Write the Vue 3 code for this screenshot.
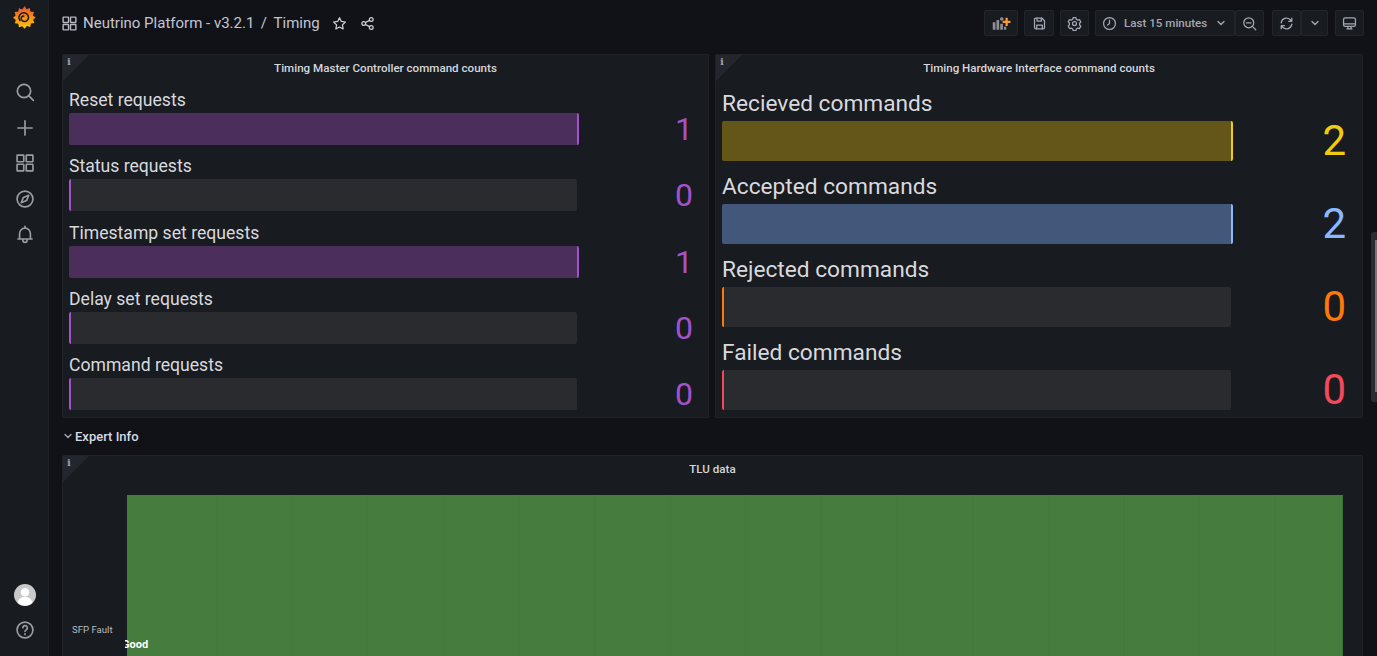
<script setup>
const leftRows = [
  { label: 'Reset requests', value: 1, tone: 'purple' },
  { label: 'Status requests', value: 0, tone: 'purple' },
  { label: 'Timestamp set requests', value: 1, tone: 'purple' },
  { label: 'Delay set requests', value: 0, tone: 'purple' },
  { label: 'Command requests', value: 0, tone: 'purple' }
]
const rightRows = [
  { label: 'Recieved commands', value: 2, tone: 'yellow' },
  { label: 'Accepted commands', value: 2, tone: 'blue' },
  { label: 'Rejected commands', value: 0, tone: 'orange' },
  { label: 'Failed commands', value: 0, tone: 'red' }
]
</script>

<template>
  <div class="app">
    <aside class="side">
      <svg class="logo" viewBox="0 0 24 24" width="24" height="24">
        <defs>
          <linearGradient id="lg" x1="0" y1="0" x2="0" y2="1">
            <stop offset="0" stop-color="#ef5228" />
            <stop offset="1" stop-color="#fbca0a" />
          </linearGradient>
        </defs>
        <path fill="url(#lg)" d="M12.6 1l2 3.2 3.2-1.2.6 3.5 3.6.5-1.2 3.4 2.9 2-2.6 2.4 1.4 3.3-3.6.5-.6 3.4-3.4-.9-2.3 2.7-2.400-2.600-3.300 1.100-.6-3.500-3.500-.6 1-3.300L1 12.700l2.600-2.200-1-3.400 3.600-.4.8-3.500 3.300 1.300z" />
        <path fill="none" stroke="#181b1f" stroke-width="1.500" stroke-linecap="round" d="M8 15.500c-2.600-3.600.2-8 4.200-7.700 3.600.3 5.600 4.400 3.400 7.200-1.700 2.200-5.200 1.900-6.200-.5-.7-1.800.6-3.600 2.400-3.500" />
      </svg>
      <nav class="side-top">
        <svg class="ico" viewBox="0 0 24 24"><circle cx="10.800" cy="10.800" r="8" /><path d="M17 17l5 5" /></svg>
        <svg class="ico" viewBox="0 0 24 24"><path d="M12 3.500v17M3.500 12h17" /></svg>
        <svg class="ico" viewBox="0 0 24 24"><rect x="2.500" y="2.500" width="8" height="8" rx=".6" /><rect x="13.500" y="2.500" width="8" height="8" rx=".6" /><rect x="2.500" y="13.500" width="8" height="8" rx=".6" /><rect x="13.500" y="13.500" width="8" height="8" rx=".6" /></svg>
        <svg class="ico" viewBox="0 0 24 24"><circle cx="12" cy="12" r="9.500" /><path d="M16.500 7.500l-2.600 6.400-6.400 2.600 2.600-6.400z" /></svg>
        <svg class="ico" viewBox="0 0 24 24"><path d="M5.500 18v-6.500a6.500 6.500 0 0113 0V18M3.500 18h17M12 2.800V5M9.500 18.500v1a2.500 2.500 0 005 0v-1" /></svg>
      </nav>
      <div class="side-bottom">
        <svg class="avatar" viewBox="0 0 22 22" width="22" height="22">
          <circle cx="11" cy="11" r="11" fill="#c9c9c9" />
          <circle cx="11" cy="8.200" r="4.200" fill="#fff" />
          <path fill="#fff" d="M3.600 19c.7-4.400 3.600-6 7.400-6s6.700 1.600 7.400 6a11 11 0 01-14.800 0z" />
        </svg>
        <svg class="ico" viewBox="0 0 24 24"><circle cx="12" cy="12" r="9.500" /><path d="M9.400 9.400a2.700 2.700 0 115 1.400c-.7 1-2.400 1.500-2.400 3" /><path d="M12 16.600v.9" /></svg>
      </div>
    </aside>

    <main class="main">
      <header class="top">
        <svg class="ico crumb-ico" viewBox="0 0 24 24"><rect x="3" y="3" width="7.600" height="7.600" rx=".6" /><rect x="13.400" y="3" width="7.600" height="7.600" rx=".6" /><rect x="3" y="13.400" width="7.600" height="7.600" rx=".6" /><rect x="13.400" y="13.400" width="7.600" height="7.600" rx=".6" /></svg>
        <span class="crumb">Neutrino Platform - v3.2.1</span>
        <span class="crumb sep">/</span>
        <span class="crumb">Timing</span>
        <svg class="ico act star" viewBox="0 0 24 24"><path d="M12 2.800l2.900 5.900 6.500.9-4.700 4.600 1.100 6.500-5.800-3.100-5.800 3.100 1.100-6.500-4.700-4.600 6.500-.9z" /></svg>
        <svg class="ico act share" viewBox="0 0 24 24"><circle cx="18" cy="5.500" r="3" /><circle cx="18" cy="18.500" r="3" /><circle cx="6" cy="12" r="3" /><path d="M8.700 10.500l6.600-3.500M8.700 13.500l6.600 3.500" /></svg>

        <div class="tools">
          <button class="btn w34">
            <svg viewBox="0 0 24 24" width="22" height="18">
              <path fill="#8e9097" d="M1 11h3.600v10H1zM6 8h3.600v13H6zM11 13h3.600v8H11zM16 17h3v4h-3z" />
              <circle cx="13" cy="6.600" r="2.400" fill="#8e9097" />
              <path fill="#ff9830" d="M18 5h3v4h3.600v3H21v4h-3v-4h-3.800V9H18z" />
            </svg>
          </button>
          <button class="btn w30">
            <svg class="tool-ico" viewBox="0 0 24 24"><path d="M4 5.500A2 2 0 016 3.500h10l4 4v11a2 2 0 01-2 2H6a2 2 0 01-2-2z" /><path d="M8 3.500v4.500h7V3.500M7.500 20.500v-6h9v6" /></svg>
          </button>
          <button class="btn w29">
            <svg class="tool-ico" viewBox="0 0 24 24"><circle cx="12" cy="12" r="3.200" /><path d="M9.800 2.500h4.400l.6 2.700 2.500 1.400 2.600-.8 2.200 3.800-2 1.900v2.900l2 1.900-2.200 3.800-2.600-.8-2.500 1.400-.6 2.700H9.800l-.6-2.700-2.500-1.400-2.600.8L1.900 16.100l2-1.900v-2.900l-2-1.900L4.100 5.800l2.600.8 2.500-1.400z" /></svg>
          </button>
          <div class="group time">
            <button class="btn time-btn">
              <svg class="tool-ico" viewBox="0 0 24 24"><circle cx="12" cy="12" r="9.500" /><path d="M12 6.500V12l-3 2.500" /></svg>
              <span>Last 15 minutes</span>
              <svg class="chev" viewBox="0 0 12 12"><path d="M3 4.500l3 3 3-3" /></svg>
            </button>
            <button class="btn w29 joined">
              <svg class="tool-ico" viewBox="0 0 24 24"><circle cx="10.800" cy="10.800" r="8" /><path d="M17 17l5 5M7 10.800h7.600" /></svg>
            </button>
          </div>
          <div class="group refresh">
            <button class="btn w29">
              <svg class="tool-ico" viewBox="0 0 24 24"><path d="M3.500 11A8.500 8.500 0 0118 6l2 2M20.500 13A8.500 8.500 0 016 18l-2-2M20.500 3.500V8.500h-5M3.500 20.500v-5h5" /></svg>
            </button>
            <button class="btn w27 joined">
              <svg class="chev" viewBox="0 0 12 12"><path d="M3 4.500l3 3 3-3" /></svg>
            </button>
          </div>
          <button class="btn w29">
            <svg class="tool-ico" viewBox="0 0 24 24"><rect x="2.500" y="3" width="19" height="13.500" rx="2.500" /><path d="M2.500 12.500h19M8 20.500h8M9.500 16.500v4M14.500 16.500v4" /></svg>
          </button>
        </div>
      </header>

      <section class="stats">
        <article class="panel">
          <div class="corner"><span>i</span></div>
          <h2 class="title">Timing Master Controller command counts</h2>
          <div class="rows small">
            <div v-for="r in leftRows" :key="r.label" class="row" :class="r.tone">
              <div class="label">{{ r.label }}</div>
              <div class="bar" :class="r.value ? 'full' : 'empty'"></div>
              <div class="value">{{ r.value }}</div>
            </div>
          </div>
        </article>
        <article class="panel">
          <div class="corner"><span>i</span></div>
          <h2 class="title">Timing Hardware Interface command counts</h2>
          <div class="rows large">
            <div v-for="r in rightRows" :key="r.label" class="row" :class="r.tone">
              <div class="label">{{ r.label }}</div>
              <div class="bar" :class="r.value ? 'full' : 'empty'"></div>
              <div class="value">{{ r.value }}</div>
            </div>
          </div>
        </article>
      </section>

      <div class="section-row">
        <svg class="chev row-chev" viewBox="0 0 12 12"><path d="M3 4.500l3 3 3-3" /></svg>
        <span>Expert Info</span>
      </div>

      <article class="panel tlu">
        <div class="corner"><span>i</span></div>
        <h2 class="title">TLU data</h2>
        <div class="timeline">
          <div class="axis">SFP Fault</div>
          <div class="plot">
            <div class="state"></div>
            <span class="state-text">Good</span>
          </div>
        </div>
      </article>
    </main>

    <div class="scrollbar"><div class="thumb"></div></div>
  </div>
</template>

<style>
html, body { margin: 0; background: #111217; overflow: hidden; }
</style>

<style scoped>
.app {
  display: flex;
  width: 1377px;
  height: 656px;
  overflow: hidden;
  position: relative;
  background: #111217;
  color: #ccccdc;
  font-family: Roboto, "Liberation Sans", sans-serif;
}
.side {
  width: 48px;
  flex: none;
  background: #181b1f;
  border-right: 1px solid #1f2126;
  display: flex;
  flex-direction: column;
  align-items: center;
  box-sizing: content-box;
}
.logo { margin-top: 5px; flex: none; }
.ico {
  width: 20px;
  height: 20px;
  fill: none;
  stroke: #9a9ca3;
  stroke-width: 2;
  stroke-linecap: round;
  stroke-linejoin: round;
  flex: none;
}
.side-top {
  margin-top: 53px;
  display: flex;
  flex-direction: column;
  gap: 15.500px;
  margin-left: 2px;
}
.side-bottom {
  margin-top: auto;
  margin-bottom: 16px;
  margin-left: 2px;
  display: flex;
  flex-direction: column;
  align-items: center;
  gap: 14px;
}
.avatar { display: block; }
.main {
  flex: 1;
  min-width: 0;
  padding: 0 14px 0 13px;
}
.top {
  height: 54px;
  box-sizing: border-box;
  padding-bottom: 8px;
  display: flex;
  align-items: center;
}
.crumb-ico { width: 17px; height: 17px; margin: 0 5px 0 -1px; stroke: #b6b7c0; stroke-width: 2; }
.crumb { font-size: 15px; color: #c3c5d3; }
.sep { margin: 0 6.500px; }
.act { width: 15px; height: 15px; stroke: #d0d1da; stroke-width: 2; }
.star { margin-left: 12px; }
.share { margin-left: 13px; }
.tools {
  margin-left: auto;
  margin-right: -1px;
  display: flex;
  align-items: center;
  gap: 6px;
}
.group { display: flex; gap: 0; }
.time { margin-right: 2px; }
.refresh { margin-right: 1px; }
.btn {
  height: 26px;
  padding: 0;
  background: #181b1f;
  border: 1px solid #22252b;
  border-radius: 2px;
  box-sizing: border-box;
  display: flex;
  align-items: center;
  justify-content: center;
  color: #a5a7b2;
  font: 500 11.600px Roboto, "Liberation Sans", sans-serif;
}
.w34 { width: 34px; }
.w30 { width: 30px; }
.w29 { width: 29px; }
.w27 { width: 27px; }
.time-btn { width: 140px; justify-content: flex-start; padding-left: 6px; }
.time-btn span { margin-left: 7px; }
.time-btn .chev { margin-left: 8px; }
.tool-ico {
  width: 15px;
  height: 15px;
  fill: none;
  stroke: #a5a7b2;
  stroke-width: 2;
  stroke-linecap: round;
  stroke-linejoin: round;
  flex: none;
}
.chev {
  width: 12px;
  height: 12px;
  fill: none;
  stroke: #a5a7b2;
  stroke-width: 1.400;
  stroke-linecap: round;
  stroke-linejoin: round;
  flex: none;
}
.stats {
  display: grid;
  grid-template-columns: 647px 648px;
  gap: 6px;
  height: 364px;
}
.panel {
  position: relative;
  background: #181b1f;
  border: 1px solid #202226;
  border-radius: 2px;
  box-sizing: border-box;
}
.corner {
  position: absolute;
  left: 0;
  top: 0;
  width: 0;
  height: 0;
  border-style: solid;
  border-width: 26px 26px 0 0;
  border-color: #23262c transparent transparent transparent;
}
.corner span {
  position: absolute;
  left: 4px;
  top: -26px;
  font: 700 10px/14px "DejaVu Serif", serif;
  color: #9ea0a8;
}
.title {
  margin: 0;
  height: 27px;
  line-height: 27px;
  text-align: center;
  font-size: 11.600px;
  font-weight: 500;
  color: #d5d6dc;
}
.rows {
  display: flex;
  flex-direction: column;
  justify-content: space-between;
}
.small { margin-top: 5px; height: 323px; padding: 0 15px 0 6px; }
.large { margin-top: 7px; height: 321px; padding: 0 16px 0 6px; }
.row {
  display: grid;
  grid-template-columns: 1fr auto;
  align-items: center;
}
.label { grid-column: 1 / 3; color: #d8d9de; white-space: nowrap; }
.small .label { font-size: 17.600px; line-height: 26px; }
.large .label { font-size: 22.700px; line-height: 30px; margin-bottom: 2px; }
.bar {
  box-sizing: border-box;
  border-radius: 2px;
  width: 508px;
  background: #2a2b2e;
  border: 0 solid;
}
.small .bar { height: 32px; }
.large .bar { height: 40px; width: 509px; }
.small .bar.full { width: 510px; }
.large .bar.full { width: 511px; }
.bar.full { border-right-width: 2px; }
.bar.empty { border-left-width: 2px; }
.value { text-align: right; }
.small .value { font-size: 32px; line-height: 32px; }
.large .value { font-size: 42px; line-height: 40px; }

.purple .bar.full { background: #4c2e5d; }
.purple .bar { border-color: #a352cc; }
.purple .value { color: #a352cc; }
.yellow .bar.full { background: #645619; }
.yellow .bar { border-color: #f2cc0c; }
.yellow .value { color: #f2cc0c; }
.blue .bar.full { background: #42577a; }
.blue .bar { border-color: #8ab8ff; }
.blue .value { color: #8ab8ff; }
.orange .bar { border-color: #ff780a; }
.orange .value { color: #ff780a; }
.red .bar { border-color: #f2495c; }
.red .value { color: #f2495c; }

.section-row {
  height: 37px;
  display: flex;
  align-items: center;
  padding-bottom: 1px;
  box-sizing: border-box;
  font-size: 13px;
  font-weight: 500;
  color: #d8d9e2;
  gap: 1px;
}
.tlu {
  width: 1301px;
  height: 240px;
}
.timeline {
  display: flex;
  height: 174px;
  margin-top: 12px;
}
.axis {
  width: 62px;
  flex: none;
  padding: 129px 0 0 9px;
  box-sizing: border-box;
  font-size: 9.600px;
  line-height: 12px;
  color: #b9bac1;
}
.plot {
  position: relative;
  width: 1218px;
  flex: none;
  overflow: hidden;
  padding-left: 2px;
  box-sizing: border-box;
}
.state {
  height: 100%;
  background-color: #467c3e;
  background-image:
    linear-gradient(to right, #467c3e 89px, transparent 89px),
    linear-gradient(to right, rgba(30, 60, 25, .05) 1px, transparent 1px);
  background-size: 100% 100%, 75.640px 100%;
  background-position: 0 0, 89px 0;
  border-right: 1px solid #3d6f37;
}
.state-text {
  position: absolute;
  left: -3px;
  top: 144px;
  font-size: 11px;
  line-height: 12px;
  font-weight: 700;
  color: #fff;
}
.scrollbar {
  position: absolute;
  left: 1371px;
  top: 232px;
  width: 6px;
  height: 170px;
  background: #2a2c31;
  border-radius: 3px 0 0 3px;
}
.thumb {
  position: absolute;
  right: 0;
  top: 8px;
  width: 2px;
  height: 152px;
  background: #75777d;
}
</style>
